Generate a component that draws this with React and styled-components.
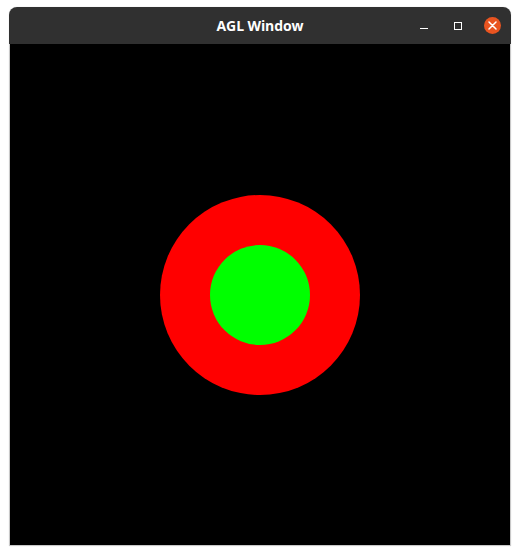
import React from 'react';
import styled, { createGlobalStyle } from 'styled-components';

const Global = createGlobalStyle`
  html, body {
    margin: 0;
    padding: 0;
    background: #ffffff;
  }
`

const Page = styled.div`
  width: 520px;
  height: 555px;
  padding: 7px 0 0 9px;
  box-sizing: border-box;
`

const Window = styled.div`
  width: 502px;
  display: flex;
  flex-direction: column;
  box-shadow: 0 0 1px rgba(0, 0, 0, 0.25);
  border-radius: 8px 8px 0 0;
`

const TitleBar = styled.div`
  height: 37px;
  background: #303030;
  border-radius: 8px 8px 0 0;
  display: grid;
  grid-template-columns: 1fr auto 1fr;
  align-items: center;
`

const Title = styled.div`
  grid-column: 2;
  color: #ffffff;
  font-family: "Open Sans", "Noto Sans", sans-serif;
  font-weight: 700;
  font-size: 14px;
  letter-spacing: -0.1px;
`

const Controls = styled.div`
  grid-column: 3;
  justify-self: end;
  display: flex;
  align-items: center;
  padding-right: 2px;
`

const ControlButton = styled.div`
  width: 34px;
  height: 24px;
  display: flex;
  align-items: center;
  justify-content: center;
`

const Minimize = styled.div`
  width: 8px;
  height: 1px;
  background: #ffffff;
  margin-top: 5px;
`

const Maximize = styled.div`
  width: 6px;
  height: 6px;
  border: 1px solid #ffffff;
`

const Close = styled.div`
  width: 17px;
  height: 17px;
  border-radius: 50%;
  background: #e95420;
  display: flex;
  align-items: center;
  justify-content: center;
`

const Canvas = styled.div`
  width: 500px;
  height: 501px;
  background: #000000;
  border: 1px solid #c8c8c8;
  border-top: none;
  display: flex;
  align-items: center;
  justify-content: center;
`

export default function App() {
  return (
    <Page>
      <Global />
      <Window>
        <TitleBar>
          <Title>AGL Window</Title>
          <Controls>
            <ControlButton><Minimize /></ControlButton>
            <ControlButton><Maximize /></ControlButton>
            <ControlButton>
              <Close>
                <svg width="9" height="9" viewBox="0 0 9 9">
                  <path d="M1 1 L8 8 M8 1 L1 8" stroke="#ffffff" strokeWidth="1.5" strokeLinecap="round" />
                </svg>
              </Close>
            </ControlButton>
          </Controls>
        </TitleBar>
        <Canvas>
          <svg width="500" height="501" viewBox="0 0 500 501">
            <circle cx="250" cy="251" r="100" fill="#ff0000" />
            <circle cx="250" cy="251" r="50" fill="#00ff00" />
          </svg>
        </Canvas>
      </Window>
    </Page>
  );
}
